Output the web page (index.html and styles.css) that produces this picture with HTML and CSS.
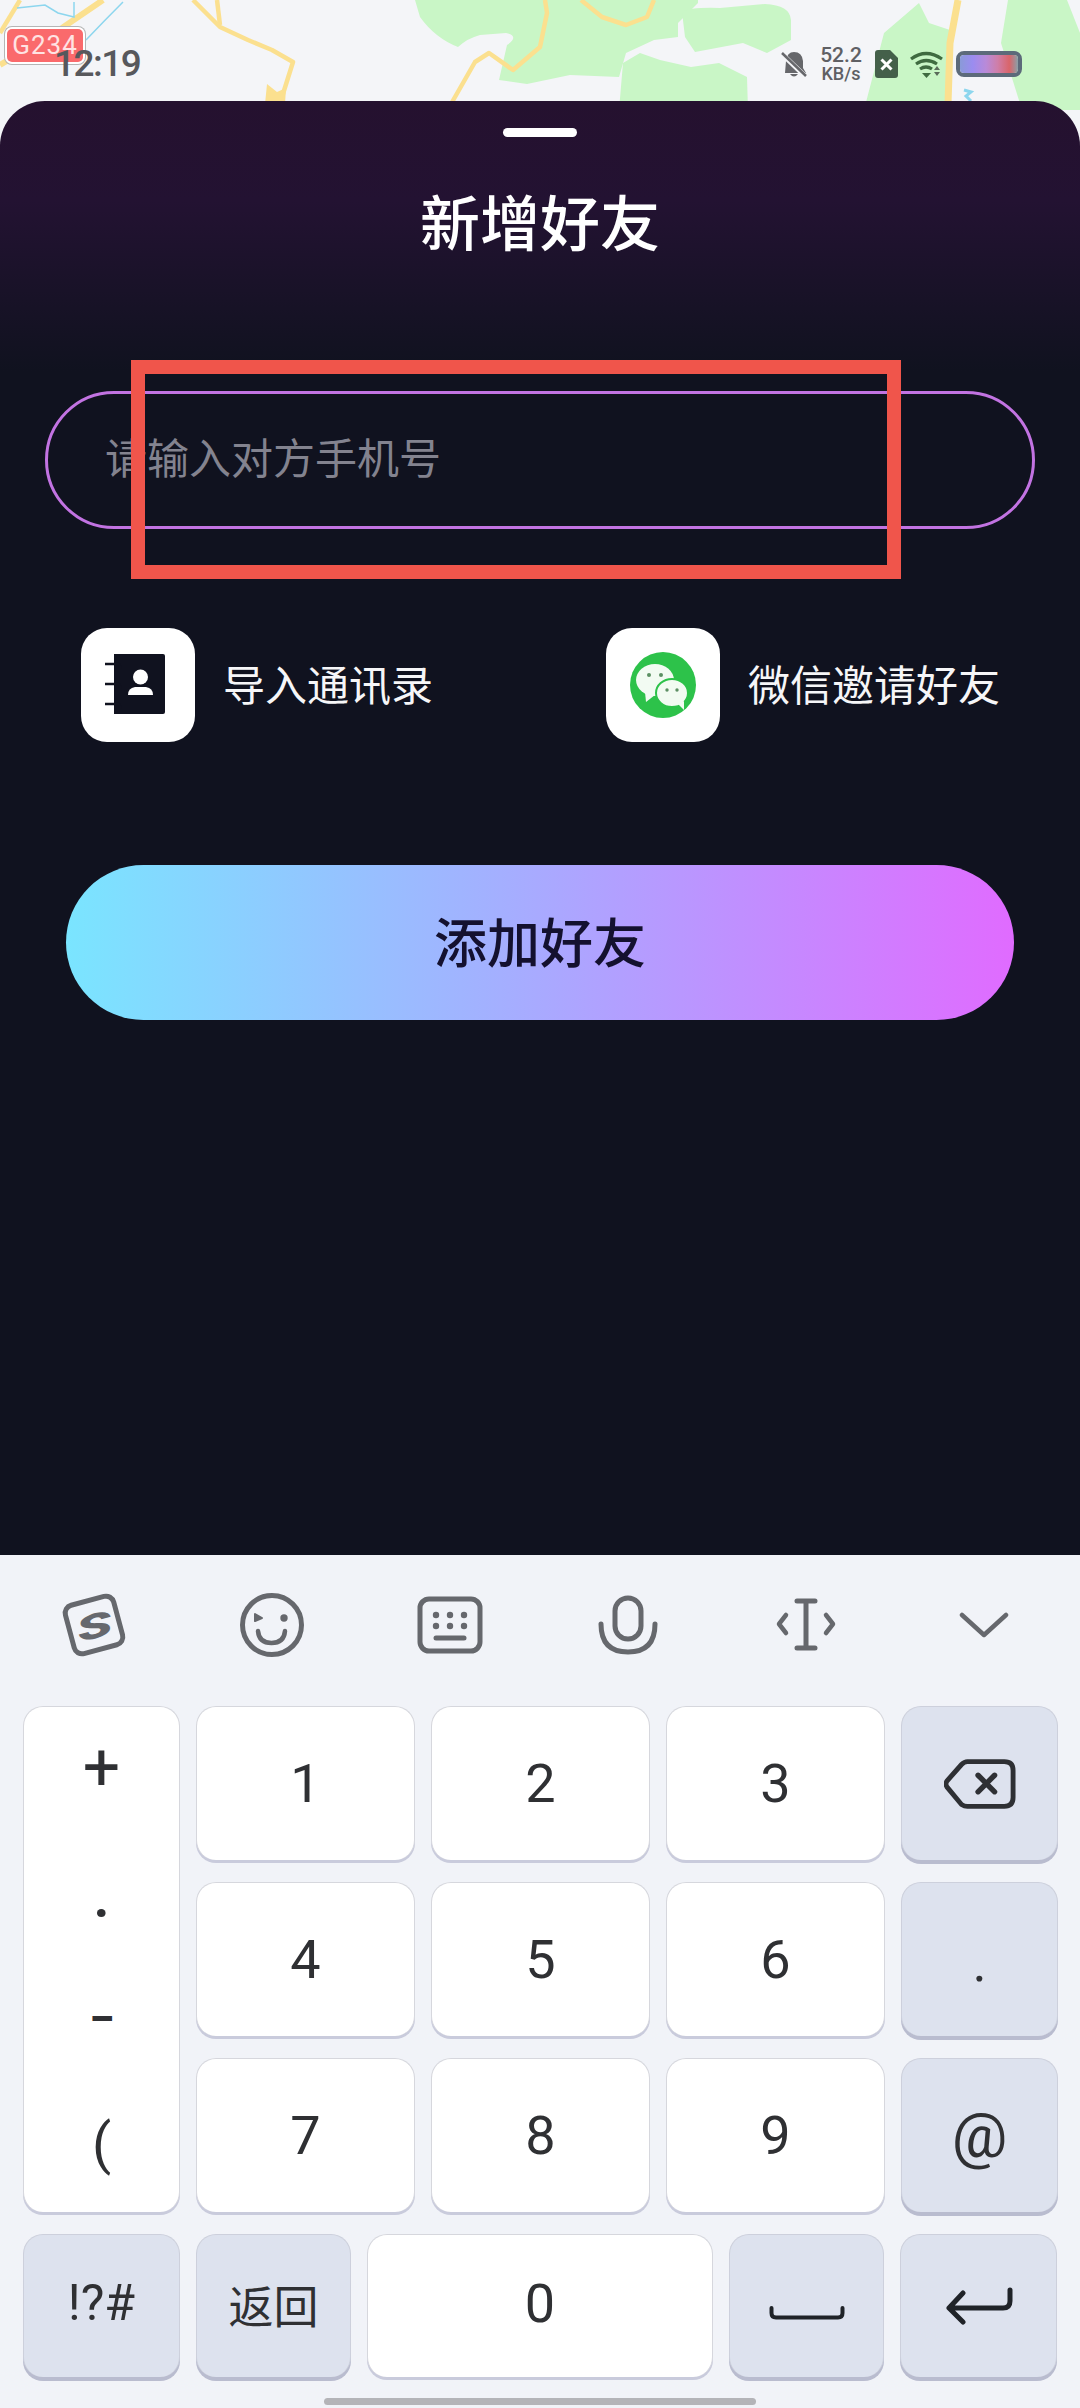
FILE: index.html
```html
<!doctype html>
<html>
  <head>
    <title>新增好友</title>
    <link rel="stylesheet" href="styles.css">
  </head>
  <body>
    <div class="screen">
      <!-- map behind the sheet -->
      <svg class="map" viewBox="0 0 1080 160" width="1080" height="160">
        <g fill="#c9f6c6">
          <path d="M415 0L420 17Q435 38 458 47Q468 38 480 35L506 33Q520 36 507 45L499 80L527 84L570 75L619 77L626 53L654 40L678 37L678 23L698 3L698 0Z"/>
          <path d="M682 12Q690 7 720 8L765 4Q790 5 791 20L791 40L767 53L743 43L695 52L685 37Z"/>
          <path d="M619 110L623 63L640 53L660 60L691 67L719 63L747 77L748 110Z"/>
          <path d="M864 110L884 33L919 3L929 23L950 30L950 110Z"/>
          <path d="M1008 0L1001 43L1022 110L1080 110L1080 33L1067 0Z"/>
        </g>
        <g fill="none" stroke="#fbe08f" stroke-width="4.500" stroke-linejoin="round">
          <path d="M20 0L0 33"/>
          <path d="M103 0L62 28L0 65" stroke-width="6"/>
          <path d="M193 0L220 27L248 40L272 50L293 62L282 97"/>
          <path d="M217 0L220 25"/>
          <path d="M451 104L475 62L489 53L513 70L540 47L547 13L545 0"/>
          <path d="M581 0L602 17L626 25L647 17L654 0"/>
          <path d="M958 0L950 43L948 104" stroke-width="7"/>
        </g>
        <path d="M265 104L267 84L277 92L286 88L285 104Z" fill="#fbe08f"/>
        <g fill="none" stroke="#8cd6ee" stroke-width="1.500">
          <path d="M17 8L45 5L58 13L74 17L74 2"/>
          <path d="M123 2Q105 20 86 40"/>
          <path d="M964 90L971 92L966 96L971 101" stroke-width="3"/>
        </g>
      </svg>

      <div class="map-sign">G234</div>

      <div class="statusbar">
        <span class="time">12:19</span>
        <div class="status-right">
          <svg width="26" height="28" viewBox="0 0 26 28">
            <path d="M5 11Q6 2 13 2Q21 2 22 11L22 18L25 23L4 23Z" fill="#66676b"/>
            <path d="M9 24Q13 29 17 24Z" fill="#66676b"/>
            <path d="M1 4L25 27" stroke="#f4f5f8" stroke-width="5"/>
            <path d="M1 3L25 26" stroke="#66676b" stroke-width="2.500"/>
          </svg>
          <div class="speed"><b>52.2</b><span>KB/s</span></div>
          <svg width="23" height="28" viewBox="0 0 23 28">
            <path d="M3 0H15L23 8V25Q23 28 20 28H3Q0 28 0 25V3Q0 0 3 0Z" fill="#44604a"/>
            <path d="M6.500 9.500L16.500 19.500M16.500 9.500L6.500 19.500" stroke="#fff" stroke-width="3"/>
          </svg>
          <svg width="34" height="27" viewBox="0 0 34 27">
            <g fill="none" stroke="#3f6b40" stroke-width="3.200">
              <path d="M1 8Q16 -3 32 8"/>
              <path d="M6 13Q16 6 27 13"/>
              <path d="M10 18Q16 14 22 18"/>
            </g>
            <path d="M12 22H21L16.500 27Z" fill="#3f6b40"/>
            <path d="M27 15L30 19H24ZM24 21H30L27 25Z" fill="#5a6b5a"/>
          </svg>
          <div class="battery"><div class="battery-fill"></div></div>
        </div>
      </div>

      <div class="sheet">
        <div class="handle"></div>
        <h1 class="title">新增好友</h1>
        <div class="phone-input">请输入对方手机号</div>
        <div class="actions">
          <div class="action">
            <div class="tile">
              <svg width="114" height="114" viewBox="0 0 114 114">
                <path d="M33 26H82Q84 26 84 28V84Q84 86 82 86H33Z" fill="#10121f"/>
                <g fill="none" stroke="#10121f" stroke-width="2.500">
                  <path d="M24 36H36Q39 36 39 39V41"/>
                  <path d="M24 56H36Q39 56 39 59V61"/>
                  <path d="M24 76H36Q39 76 39 79V81"/>
                </g>
                <circle cx="59.500" cy="49" r="7.500" fill="#fff"/>
                <path d="M47 67Q47 60 54 59L65 59Q72 60 72 67Z" fill="#fff"/>
              </svg>
            </div>
            <span class="action-label">导入通讯录</span>
          </div>
          <div class="action">
            <div class="tile">
              <svg width="114" height="114" viewBox="0 0 114 114">
                <circle cx="57" cy="57" r="33" fill="#2dc24a"/>
                <ellipse cx="49" cy="52" rx="19" ry="16" fill="#f2fbf2"/>
                <path d="M39 64L40 74L49 67Z" fill="#f2fbf2"/>
                <ellipse cx="66" cy="65" rx="16" ry="14" fill="#f2fbf2" stroke="#2dc24a" stroke-width="2"/>
                <path d="M72 76L78 82L78 73Z" fill="#f2fbf2"/>
                <g fill="#5c8f63">
                  <circle cx="43" cy="47" r="2"/>
                  <circle cx="55" cy="47" r="2"/>
                  <circle cx="61" cy="62" r="1.700"/>
                  <circle cx="71" cy="62" r="1.700"/>
                </g>
              </svg>
            </div>
            <span class="action-label">微信邀请好友</span>
          </div>
        </div>
        <div class="add-btn">添加好友</div>
        <div class="mark"></div>
      </div>

      <div class="keyboard">
        <div class="toolbar">
          <div class="tool">
            <svg width="70" height="70" viewBox="0 0 70 70">
              <g transform="rotate(-15 35 35)">
                <rect x="10" y="10" width="50" height="50" rx="8" fill="none" stroke="#66686d" stroke-width="5"/>
                <text transform="translate(35 48) scale(1.400 0.800)" class="logo-s">S</text>
              </g>
            </svg>
          </div>
          <div class="tool">
            <svg width="70" height="70" viewBox="0 0 70 70">
              <circle cx="35" cy="35" r="29.500" fill="none" stroke="#66686d" stroke-width="5"/>
              <path d="M18 24L25 28L18 31Z" fill="#66686d" stroke="#66686d" stroke-width="2" stroke-linejoin="round"/>
              <circle cx="47" cy="28" r="3.700" fill="#66686d"/>
              <path d="M21 41Q22 53 34.500 53Q47 53 48 41" fill="none" stroke="#66686d" stroke-width="4.500" stroke-linecap="round"/>
            </svg>
          </div>
          <div class="tool">
            <svg width="70" height="62" viewBox="0 0 70 62">
              <rect x="5" y="5" width="60" height="52" rx="9" fill="none" stroke="#66686d" stroke-width="5"/>
              <g fill="#66686d">
                <circle cx="21" cy="21" r="3.200"/><circle cx="35" cy="21" r="3.200"/><circle cx="49" cy="21" r="3.200"/>
                <circle cx="21" cy="32" r="3.200"/><circle cx="35" cy="32" r="3.200"/><circle cx="49" cy="32" r="3.200"/>
              </g>
              <path d="M21 44H49" stroke="#66686d" stroke-width="5" stroke-linecap="round"/>
            </svg>
          </div>
          <div class="tool">
            <svg width="60" height="60" viewBox="0 0 60 60">
              <rect x="17" y="3" width="26" height="41" rx="13" fill="none" stroke="#66686d" stroke-width="5"/>
              <path d="M3 29Q3 57 30 57Q57 57 57 29" fill="none" stroke="#66686d" stroke-width="5" stroke-linecap="round"/>
            </svg>
          </div>
          <div class="tool">
            <svg width="62" height="54" viewBox="0 0 62 54">
              <path d="M22 3H40M22 50H40M31 3V50" fill="none" stroke="#66686d" stroke-width="5" stroke-linecap="round"/>
              <path d="M11 17L4 26L11 35M51 17L58 26L51 35" fill="none" stroke="#66686d" stroke-width="4.500" stroke-linecap="round" stroke-linejoin="round"/>
            </svg>
          </div>
          <div class="tool">
            <svg width="50" height="28" viewBox="0 0 50 28">
              <path d="M3 4L25 24L47 4" fill="none" stroke="#66686d" stroke-width="4.500" stroke-linecap="round" stroke-linejoin="round"/>
            </svg>
          </div>
        </div>

        <div class="keys">
          <div class="key tall">
            <span class="sym plus">+</span>
            <span class="sym dot">·</span>
            <span class="sym dash">–</span>
            <span class="sym paren">(</span>
          </div>
          <div class="key">1</div>
          <div class="key">2</div>
          <div class="key">3</div>
          <div class="key fn">
            <svg width="72" height="52" viewBox="0 0 74 52">
              <path d="M24 3H62Q71 3 71 12V40Q71 49 62 49H24Q21 49 18 47L3 29Q1 26 3 23L18 6Q21 3 24 3Z" fill="none" stroke="#2e3034" stroke-width="5"/>
              <path d="M35 17L52 34M52 17L35 34" stroke="#2e3034" stroke-width="5.500" stroke-linecap="round"/>
            </svg>
          </div>
          <div class="key">4</div>
          <div class="key">5</div>
          <div class="key">6</div>
          <div class="key fn period">.</div>
          <div class="key">7</div>
          <div class="key">8</div>
          <div class="key">9</div>
          <div class="key fn at">@</div>
        </div>

        <div class="bottom-row">
          <div class="key fn side symbols">!?#</div>
          <div class="key fn mid back">返回</div>
          <div class="key zero">0</div>
          <div class="key fn mid">
            <svg class="space-icon" width="76" height="14" viewBox="0 0 76 14">
              <path d="M2.500 2V7Q2.500 11.500 7 11.500H69Q73.500 11.500 73.500 7V2" fill="none" stroke="#1f2328" stroke-width="4" stroke-linecap="round"/>
            </svg>
          </div>
          <div class="key fn side">
            <svg width="68" height="38" viewBox="0 0 68 38">
              <path d="M65 3V14Q65 21 58 21H5M18 6L4 21L18 35" fill="none" stroke="#1f2328" stroke-width="5" stroke-linecap="round" stroke-linejoin="round"/>
            </svg>
          </div>
        </div>

        <div class="homebar"></div>
      </div>
    </div>
  </body>
</html>
```

FILE: styles.css
```css
* { margin: 0; padding: 0; box-sizing: border-box; }
body { font-family: Roboto, "Noto Sans CJK SC", sans-serif; background: #f4f5f8; }

.screen { position: relative; width: 1080px; height: 2408px; overflow: hidden; display: flex; flex-direction: column; }
.map { position: absolute; left: 0; top: 0; }
.map-sign { position: absolute; left: 7px; top: 29px; width: 76px; height: 33px; background: #fa6a6c; border-radius: 5px; box-shadow: 0 0 0 2px #fff, 0 0 0 3px #b5b5b5; color: #ffe3e3; font-size: 26px; line-height: 33px; text-align: center; letter-spacing: 1px; }

/* status bar */
.statusbar { position: relative; height: 101px; flex: none; display: flex; align-items: flex-start; padding: 44px 58px 0 54px; }
.time { font-size: 37px; line-height: 40px; font-weight: 500; color: #57585c; letter-spacing: -1.500px; }
.status-right { margin-left: auto; display: flex; align-items: center; gap: 12px; height: 40px; }
.speed { width: 42px; display: flex; flex-direction: column; align-items: center; color: #5f6064; margin: 0 1px; }
.speed b { font-size: 21px; line-height: 20px; font-weight: 500; }
.speed span { font-size: 18px; line-height: 18px; font-weight: 500; }
.battery { width: 66px; height: 26px; border: 4px solid #5c6a7a; border-radius: 8px; overflow: hidden; }
.battery-fill { height: 100%; background: linear-gradient(90deg, #8a9ad8, #9b8cf0 22%, #b98ad8 45%, #cf7ea8 65%, #d9656a 85%, #8aa0a8); }

/* sheet */
.sheet { position: relative; height: 1454px; flex: none; background: linear-gradient(#25112f 0, #231232 100px, #10121f 270px); border-radius: 45px 45px 0 0; display: flex; flex-direction: column; align-items: center; }
.handle { width: 74px; height: 9px; margin-top: 27px; border-radius: 5px; background: #fff; }
.title { margin-top: 47px; font-size: 60px; line-height: 84px; font-weight: 500; color: #fff; }
.phone-input { width: 990px; height: 138px; margin-top: 123px; border: 3px solid #c273e2; border-radius: 69px; padding-left: 57px; font-size: 42px; line-height: 132px; color: #83838f; }
.actions { width: 100%; height: 114px; margin-top: 99px; padding-left: 81px; display: flex; }
.action { width: 525px; flex: none; display: flex; align-items: center; gap: 28px; }
.tile { width: 114px; height: 114px; background: #fff; border-radius: 26px; }
.action-label { font-size: 42px; color: #f6f6f8; padding-bottom: 5px; }
.add-btn { width: 948px; height: 155px; margin-top: 123px; border-radius: 78px; background: linear-gradient(90deg, #7ae5ff, #a3b0ff 45%, #e06bff); color: #14112f; font-size: 53px; font-weight: 500; line-height: 160px; text-align: center; }
.mark { position: absolute; left: 131px; top: 259px; width: 770px; height: 219px; border: 14px solid #f0554b; }

/* keyboard */
.keyboard { flex: 1; background: #f1f3f8; }
.toolbar { height: 151px; padding: 0 8px 12px 5px; display: grid; grid-template-columns: repeat(6, 178px); align-items: center; }
.tool { display: flex; justify-content: center; align-items: center; }
.logo-s { font-family: Roboto, sans-serif; font-size: 42px; font-weight: 900; font-style: italic; fill: #66686d; text-anchor: middle; }

.keys { margin-left: 23px; display: grid; grid-template-columns: 157px 219px 219px 219px 157px; grid-auto-rows: 154px; gap: 22px 16px; }
.key { display: flex; justify-content: center; align-items: center; background: #fff; border-radius: 20px; border: 1px solid #d6d7dd; border-bottom: none; box-shadow: 0 3px 0 #c9cbdc; font-size: 54px; color: #2f3033; }
.key.fn { background: #dde2ee; box-shadow: 0 4px 0 #b9bccf; border-color: #cdd0dc; }
.key.tall { grid-row: span 3; flex-direction: column; justify-content: flex-start; }
.sym { height: 60px; line-height: 60px; }
.plus { margin-top: 31px; font-size: 66px; }
.dot { margin-top: 85px; font-size: 54px; font-weight: 700; }
.dash { margin-top: 46px; font-size: 38px; font-weight: 900; }
.paren { margin-top: 65px; font-size: 56px; }
.period { padding-top: 6px; }
.at { font-size: 62px; }

.bottom-row { margin: 22px 0 0 23px; display: flex; gap: 16px; height: 143px; }
.side { width: 157px; }
.mid { width: 155px; }
.zero { width: 346px; padding-bottom: 5px; }
.symbols { font-size: 50px; padding-bottom: 7px; }
.back { font-size: 45px; padding-bottom: 4px; }
.space-icon { margin-top: 13px; }
.homebar { width: 432px; height: 7px; margin: 21px auto 0; border-radius: 4px; background: #b4b4b8; }
```
